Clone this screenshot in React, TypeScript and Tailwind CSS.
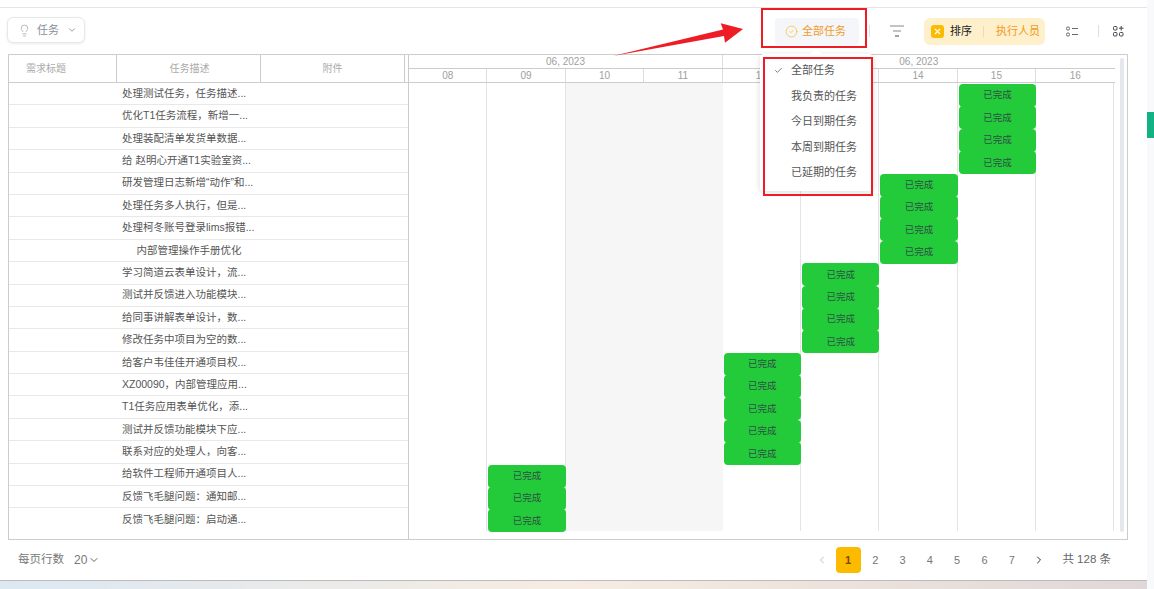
import type {FC} from 'react';
import {Check, ChevronDown, ChevronLeft, ChevronRight, CircleCheck, Lightbulb, X} from "lucide-react";

const font = "font-['Liberation_Sans','Noto_Sans_CJK_SC',sans-serif]";

const days = ["08", "09", "10", "11", "12", "13", "14", "15", "16"];

// col = index of the day a task sits on
const tasks = [
    {name: "处理测试任务，任务描述...", col: 7},
    {name: "优化T1任务流程，新增一...", col: 7},
    {name: "处理装配清单发货单数据...", col: 7},
    {name: "给 赵明心开通T1实验室资...", col: 7},
    {name: "研发管理日志新增“动作”和...", col: 6},
    {name: "处理任务多人执行，但是...", col: 6},
    {name: "处理柯冬账号登录lims报错...", col: 6},
    {name: "内部管理操作手册优化", col: 6},
    {name: "学习简道云表单设计，流...", col: 5},
    {name: "测试并反馈进入功能模块...", col: 5},
    {name: "给同事讲解表单设计，数...", col: 5},
    {name: "修改任务中项目为空的数...", col: 5},
    {name: "给客户韦佳佳开通项目权...", col: 4},
    {name: "XZ00090，内部管理应用...", col: 4},
    {name: "T1任务应用表单优化，添...", col: 4},
    {name: "测试并反馈功能模块下应...", col: 4},
    {name: "联系对应的处理人，向客...", col: 4},
    {name: "给软件工程师开通项目人...", col: 1},
    {name: "反馈飞毛腿问题：通知邮...", col: 1},
    {name: "反馈飞毛腿问题：启动通...", col: 1},
];

const menuItems = ["全部任务", "我负责的任务", "今日到期任务", "本周到期任务", "已延期的任务"];

const Toolbar: FC = () => (
    <div className="flex items-center h-[46px] pl-[7px] pr-[23px]">
        <button className="flex items-center w-[78px] h-[26px] -mt-[2px] pl-[10px] bg-white border border-[#e8e8e8] rounded-md shadow-[0_1px_3px_rgba(0,0,0,0.08)] text-[11px] text-[#8a8f99]">
            <Lightbulb className="w-[13px] h-[13px] text-[#9a9a9a]" strokeWidth={1.25}/>
            <span className="ml-[6px]">任务</span>
            <ChevronDown className="w-[10px] h-[10px] ml-2 text-[#888]"/>
        </button>

        <div className="flex items-center ml-auto">
            <button className="flex items-center w-[84px] h-[27px] pl-[10px] bg-[#f5f6fa] rounded text-[11px] text-[#f29a1f]">
                <CircleCheck className="w-[13px] h-[13px] text-[#f7c531]" strokeWidth={1.5}/>
                <span className="ml-[4px]">全部任务</span>
            </button>
            <span className="w-px h-3 ml-[10px] bg-[#dcdfe6]"/>
            <svg className="ml-[20px]" width="14" height="12" viewBox="0 0 14 12" fill="none">
                <path d="M0 1h14" stroke="#9a9da6" strokeWidth="1.2"/>
                <path d="M3 6h8" stroke="#9a9da6" strokeWidth="1.2"/>
                <path d="M5 11h4" stroke="#5f636d" strokeWidth="1.2"/>
            </svg>
            <div className="flex items-center w-[121px] h-[27px] ml-[20px] pl-[7px] bg-[#fdf0cb] rounded-md text-[11px]">
                <span className="flex items-center justify-center w-[13px] h-[13px] bg-[#fdbb00] rounded-[3px]">
                    <X className="w-[9px] h-[9px] text-white" strokeWidth={3}/>
                </span>
                <span className="ml-[6px] text-[#222]">排序</span>
                <span className="w-px h-[11px] ml-[11px] bg-[#e8dcb8]"/>
                <span className="ml-[12px] text-[#f29a1f]">执行人员</span>
            </div>
            <svg className="ml-[21px]" width="12" height="11" viewBox="0 0 12 11" fill="none" stroke="#666a74">
                <circle cx="2" cy="2.5" r="1.6"/>
                <circle cx="2" cy="8.5" r="1.6"/>
                <path d="M6 2.5h6M6 8.5h6"/>
            </svg>
            <span className="w-px h-3 ml-[20px] bg-[#dcdfe6]"/>
            <svg className="ml-[14px]" width="11" height="11" viewBox="0 0 11 11" fill="none" stroke="#3f444f">
                <rect x="0.5" y="0.5" width="3.5" height="3.5" rx="1"/>
                <rect x="0.5" y="6.5" width="3.5" height="3.5" rx="1"/>
                <rect x="6.5" y="6.5" width="3.5" height="3.5" rx="1"/>
                <path d="M8.2 0v4.5M6 2.2h4.5"/>
            </svg>
        </div>
    </div>
);

const TaskList: FC = () => (
    <section className="w-[400px] shrink-0 border-r border-[#ccc]">
        <div className="flex h-[28px] border-b border-[#ccc] text-[10px] text-[#aaa]">
            <div className="flex items-center w-[108px] pl-[17px] border-r border-[#ccc]">需求标题</div>
            <div className="flex items-center justify-center w-[144px] pl-[2px] border-r border-[#ccc]">任务描述</div>
            <div className="flex items-center justify-center w-[144px] border-r border-[#ccc]">附件</div>
        </div>
        {tasks.map(task => (
            <div key={task.name} className="flex items-center h-[22.4px] pl-[108px] border-b border-[#e8e8e8] last:border-b-0 text-[10.5px] text-[#555]">
                {/* cut-off names start at the cell padding, full ones stay centred */}
                <span className={task.name.endsWith("...") ? "pl-[5px] whitespace-nowrap" : "w-[144px] text-center whitespace-nowrap"}>
                    {task.name}
                </span>
            </div>
        ))}
    </section>
);

const Gantt: FC = () => (
    <section className="w-[705.5px] shrink-0">
        <div className="flex h-[14px] border-b border-[#ccc] text-[10px] leading-[13px] text-[#a0a0a0]">
            <div className="w-[314px] text-center border-r border-[#ddd]">06, 2023</div>
            <div className="w-[391.5px] text-center">06, 2023</div>
        </div>
        <div className="grid grid-cols-9 h-[14px] border-b border-[#ccc] text-[10px] leading-[13px] text-[#a0a0a0]">
            {days.map(day => (
                <div key={day} className="text-center border-r border-[#ddd] last:border-r-0">{day}</div>
            ))}
        </div>
        <div className="grid grid-cols-9 grid-rows-[repeat(20,22.4px)]">
            {days.map((day, i) => (
                <div
                    key={day}
                    className={i === 2 || i === 3 ? "bg-[#f6f6f6]" : "border-r border-[#e4e4e4] last:border-r-0"}
                    style={{gridColumn: i + 1, gridRow: "1 / -1"}}
                />
            ))}
            {tasks.map((task, i) => (
                <div
                    key={task.name}
                    className="flex items-center justify-center h-[23px] mt-[1px] ml-px bg-[#23cb3a] rounded-[4px] text-[9.5px] text-[#2f4f46]"
                    style={{gridColumn: task.col + 1, gridRow: i + 1}}
                >
                    已完成
                </div>
            ))}
        </div>
    </section>
);

const Pagination: FC = () => (
    <div className="flex items-center ml-auto mr-[36px] text-[11px] text-[#777]">
        <ChevronLeft className="w-3 h-3 mr-2 text-[#aaa]" strokeWidth={1.5}/>
        <span className="flex items-center justify-center w-[25px] h-[26px] mr-px bg-[#fdbb00] rounded-[4px] font-bold text-[#7a4a00]">1</span>
        {[2, 3, 4, 5, 6, 7].map(page => (
            <span key={page} className="w-[27.3px] text-center">{page}</span>
        ))}
        <ChevronRight className="w-3 h-3 ml-[8px] text-[#333]" strokeWidth={2}/>
        <span className="ml-[17px] text-[11.5px] text-[#666]">共 128 条</span>
    </div>
);

export default function App() {
    return (
        <div className={`relative flex w-[1154px] h-[589px] overflow-hidden bg-white ${font}`}>
            <main className="flex flex-col w-[1147px] shrink-0">
                <div className="h-[8px] shrink-0 border-b border-[#e5e5e5]"/>
                <Toolbar/>
                <div className="flex h-[486px] w-[1120px] ml-2 shrink-0 border border-[#ccc]">
                    <TaskList/>
                    <Gantt/>
                    <div className="w-[4px] ml-[5.5px] mt-[3px] h-[474px] bg-[#e5e7ee] rounded-sm"/>
                </div>
                <div className="flex items-center h-[40px] shrink-0 pl-[18px]">
                    <span className="text-[11.5px] text-[#777]">每页行数</span>
                    <span className="ml-[10px] text-[12px] text-[#777]">20</span>
                    <ChevronDown className="w-3 h-3 ml-[1px] text-[#666]"/>
                    <Pagination/>
                </div>
                <div className="flex-1 border-t border-[#bbb] bg-gradient-to-r from-[#dce8f2] via-[#f6ece2] to-[#e0d8d8]"/>
            </main>
            <aside className="flex-1 pt-[112px] bg-[#f8f9fa]">
                <div className="h-[26px] bg-[#12b284]"/>
            </aside>

            {/* dropdown */}
            <div className="absolute left-[760px] top-[54px] w-[113px] h-[137px] pt-[3.5px] bg-white rounded-sm shadow-[0_1px_6px_rgba(0,0,0,0.14)] text-[11px] text-[#555]">
                <span className="absolute left-[52px] -top-[4px] w-2 h-2 rotate-45 bg-white"/>
                {menuItems.map((item, i) => (
                    <div key={item} className="relative flex items-center h-[25.5px] pl-[31px]">
                        {i === 0 && <Check className="absolute left-[14px] w-[9px] h-[9px] text-[#555]" strokeWidth={2}/>}
                        {item}
                    </div>
                ))}
            </div>

            {/* red annotations */}
            <div className="absolute left-[761px] top-[8px] w-[106px] h-[40px] border-2 border-[#ee1c25]"/>
            <div className="absolute left-[763px] top-[57px] w-[110px] h-[139px] border-2 border-[#ee1c25]"/>
            <svg className="absolute left-0 top-0" width="1154" height="589" fill="#ee1c25">
                <polygon points="613,56 723,29.5 720.7,23.3 743,29 725,42.7 724,36"/>
            </svg>
        </div>
    );
}
